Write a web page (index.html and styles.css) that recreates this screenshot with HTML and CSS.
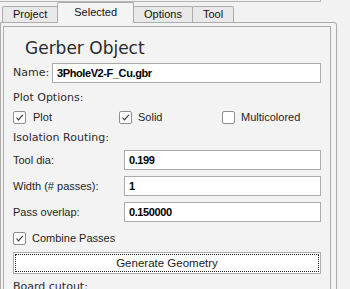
FILE: index.html
```html
<!DOCTYPE html>
<html lang="en">
<head>
    <meta charset="UTF-8">
    <title>Gerber Object</title>
    <link rel="stylesheet" href="styles.css">
</head>
<body>
    <div class="topline"></div>

    <div class="tabs">
        <div class="tab">Project</div>
        <div class="tab active">Selected</div>
        <div class="tab">Options</div>
        <div class="tab">Tool</div>
    </div>

    <div class="pane">
        <div class="frame">
            <h1 class="title">Gerber Object</h1>

            <div class="name-row">
                <span class="head">Name:</span>
                <div class="field">3PholeV2-F_Cu.gbr</div>
            </div>

            <div class="head section">Plot Options:</div>
            <div class="checks">
                <div class="check">
                    <span class="box"><svg viewBox="0 0 11 11" width="11" height="11"><path d="M2.5 5.5 L4.5 7.8 L8.8 2.8" fill="none" stroke="#333" stroke-width="1.1"/></svg></span>
                    Plot
                </div>
                <div class="check">
                    <span class="box"><svg viewBox="0 0 11 11" width="11" height="11"><path d="M2.5 5.5 L4.5 7.8 L8.8 2.8" fill="none" stroke="#333" stroke-width="1.1"/></svg></span>
                    Solid
                </div>
                <div class="check">
                    <span class="box"></span>
                    Multicolored
                </div>
            </div>

            <div class="head section iso">Isolation Routing:</div>
            <div class="form">
                <span class="label">Tool dia:</span>
                <div class="field">0.199</div>
                <span class="label">Width (# passes):</span>
                <div class="field">1</div>
                <span class="label">Pass overlap:</span>
                <div class="field">0.150000</div>
            </div>

            <div class="check combine">
                <span class="box"><svg viewBox="0 0 11 11" width="11" height="11"><path d="M2.5 5.5 L4.5 7.8 L8.8 2.8" fill="none" stroke="#333" stroke-width="1.1"/></svg></span>
                Combine Passes
            </div>

            <div class="button">Generate Geometry</div>

            <div class="head section cutout">Board cutout:</div>
        </div>
    </div>
</body>
</html>
```

FILE: styles.css
```css
body {
    margin: 0;
    background-color: #f2f2f2;
    font-family: "Liberation Sans", Arial, sans-serif;
    font-size: 11px;
    color: #1e1e1e;
    overflow: hidden;
}
.topline {
    width: 320px;
    height: 1px;
    border-bottom: 1px solid #b4b4b4;
    border-right: 1px solid #b4b4b4;
}
.tabs {
    display: flex;
    align-items: flex-end;
    height: 20px;
    padding-left: 2px;
}
.tab {
    box-sizing: border-box;
    height: 16px;
    padding: 0 10px;
    line-height: 15px;
    border: 1px solid #acacac;
    border-bottom: none;
    border-radius: 2px 2px 0 0;
    background-color: #e9e9e9;
    color: #111;
    margin-right: -1px;
}
.tab.active {
    position: relative;
    z-index: 1;
    height: 21px;
    margin-bottom: -1px;
    padding: 2px 16px 0;
    background-color: #f4f4f4;
}
.pane {
    box-sizing: border-box;
    width: 337px;
    height: 300px;
    padding: 3px 5px 0 2px;
    border: 1px solid #acacac;
    border-radius: 0 3px 0 0;
    background-color: #f3f3f3;
}
.frame {
    height: 300px;
    padding: 10px 9px 0 9px;
    border: 1px solid #acacac;
    background-color: #f3f3f3;
}
.title {
    margin: 0;
    padding-left: 12px;
    font-family: "DejaVu Sans", sans-serif;
    font-size: 17px;
    font-weight: normal;
    line-height: 22px;
    color: #2a2a2a;
}
.head {
    font-family: "DejaVu Sans", sans-serif;
    font-size: 11px;
    color: #2c2c2c;
}
.name-row {
    display: grid;
    grid-template-columns: 39px 1fr;
    align-items: center;
    margin-top: 4px;
    line-height: 20px;
}
.field {
    box-sizing: border-box;
    height: 20px;
    padding: 0 4px;
    line-height: 18px;
    border: 1px solid #ababab;
    background-color: #fff;
    color: #000;
    font-weight: bold;
    letter-spacing: -0.4px;
}
.section {
    margin-top: 7px;
    line-height: 16px;
}
.checks {
    display: grid;
    grid-template-columns: 106px 103px 1fr;
    margin-top: 3px;
}
.check {
    display: flex;
    align-items: center;
    gap: 6px;
    height: 16px;
    color: #1e1e1e;
}
.box {
    box-sizing: border-box;
    width: 13px;
    height: 13px;
    display: flex;
    align-items: center;
    justify-content: center;
    border: 1px solid #8e8e8e;
    border-radius: 2px;
    background-color: #fff;
}
.check:first-child {
    gap: 7px;
}
.iso {
    margin-top: 5px;
}
.form {
    display: grid;
    grid-template-columns: 111px 1fr;
    row-gap: 6px;
    align-items: center;
    margin-top: 4px;
}
.label {
    line-height: 20px;
}
.combine {
    margin-top: 8px;
}
.button {
    box-sizing: border-box;
    height: 22px;
    margin-top: 6px;
    border: 1px solid #adadad;
    background-color: #fff;
    outline: 1px dotted #222;
    outline-offset: -3px;
    text-align: center;
    line-height: 20px;
    font-size: 11.5px;
    color: #222;
}
.cutout {
    margin-top: 5px;
}
```
